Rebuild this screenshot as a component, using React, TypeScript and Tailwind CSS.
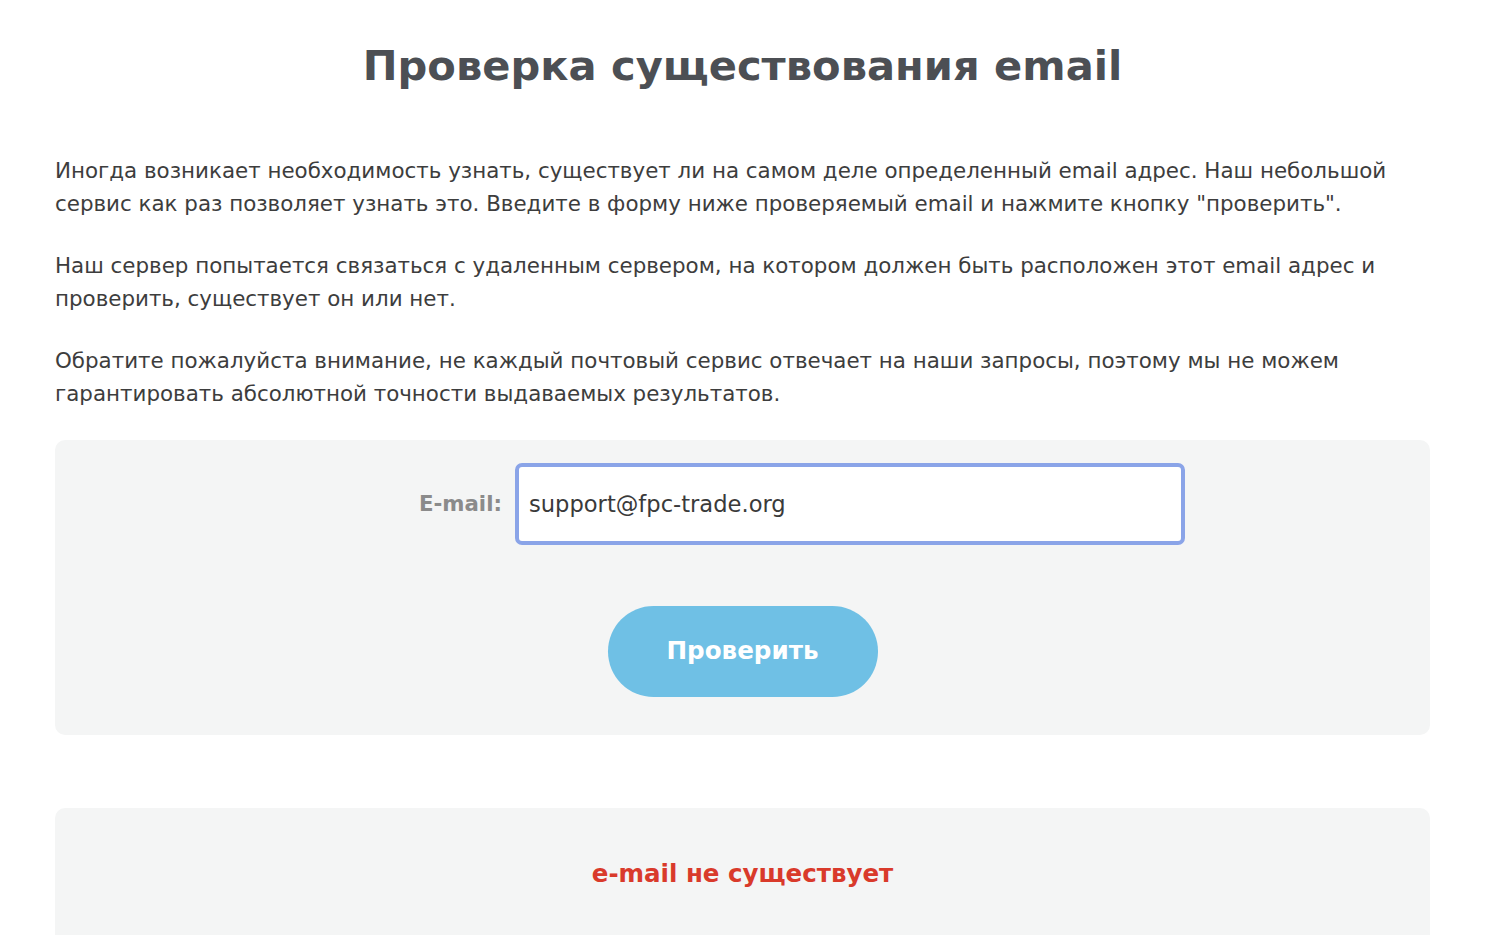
import React, { useState } from 'react';

const paragraphs = [
  'Иногда возникает необходимость узнать, существует ли на самом деле определенный email адрес. Наш небольшой сервис как раз позволяет узнать это. Введите в форму ниже проверяемый email и нажмите кнопку "проверить".',
  'Наш сервер попытается связаться с удаленным сервером, на котором должен быть расположен этот email адрес и проверить, существует он или нет.',
  'Обратите пожалуйста внимание, не каждый почтовый сервис отвечает на наши запросы, поэтому мы не можем гарантировать абсолютной точности выдаваемых результатов.',
];

const EmailCheck = () => {
  const [email, setEmail] = useState('support@fpc-trade.org');

  return (
    <div className="min-h-screen bg-white font-['DejaVu_Sans',sans-serif]">
      <div className="ml-[55px] w-[1375px] pt-[36px]">
        <h1 className="text-center text-[41.6px] font-bold leading-[60px] text-[#4c4f54]">
          Проверка существования email
        </h1>

        {/* Description */}
        <div className="mt-[58px] space-y-[29px] pr-[20px] text-[21.4px] leading-[33px] text-[#3d3d3d]">
          {paragraphs.map((p) => (
            <p key={p}>{p}</p>
          ))}
        </div>

        {/* Form */}
        <form
          onSubmit={(e) => e.preventDefault()}
          className="mt-[30px] rounded-[10px] bg-[#f4f5f5] pt-[23px] pb-[38px]"
        >
          <div className="flex items-center">
            <label
              htmlFor="email"
              className="w-[460px] pr-[13px] text-right text-[21.3px] font-bold text-[#8b8b8b]"
            >
              E-mail:
            </label>
            <input
              id="email"
              type="email"
              value={email}
              onChange={(e) => setEmail(e.target.value)}
              className="h-[82px] w-[670px] rounded-[7px] border-4 border-[#8aa4e8] bg-white pl-[10px] text-[22.6px] text-[#3a3a3a] outline-none"
            />
          </div>
          <div className="mt-[61px] flex justify-center">
            <button
              type="submit"
              className="h-[91px] w-[270px] rounded-full bg-[#6fc0e5] text-[24.6px] font-bold text-white"
            >
              Проверить
            </button>
          </div>
        </form>

        {/* Result */}
        <div className="mt-[73px] flex h-[160px] justify-center rounded-t-[10px] bg-[#f4f5f5] pt-[50px]">
          <span className="text-[24.5px] font-bold leading-[32px] text-[#d93a2b]">e-mail не существует</span>
        </div>
      </div>
    </div>
  );
};

export default function App() {
  return <EmailCheck />;
}
